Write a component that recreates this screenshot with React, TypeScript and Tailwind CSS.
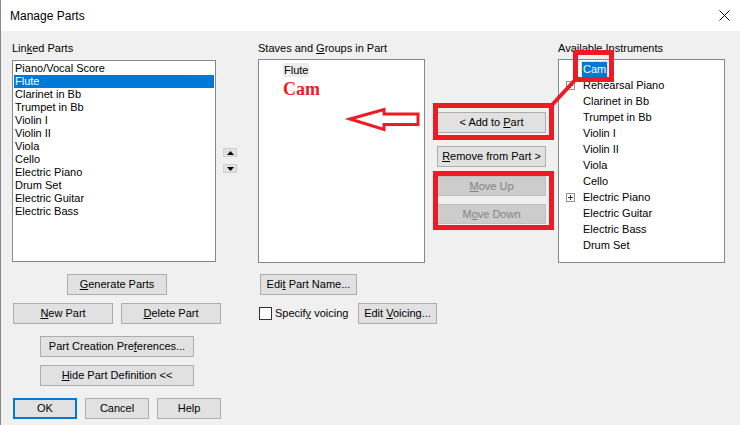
import React from 'react';

const font = { fontFamily: '"Liberation Sans", Arial, sans-serif' };

interface BtnProps {
  children: React.ReactNode;
  className?: string;
  disabled?: boolean;
  primary?: boolean;
}

const Btn: React.FC<BtnProps> = ({ children, className = '', disabled, primary }) => (
  <div
    className={
      (disabled
        ? 'bg-[#cccccc] border border-[#bfbfbf] text-[#838383] '
        : primary
        ? 'bg-[#e1e1e1] border-2 border-[#0078d7] text-black '
        : 'bg-[#e1e1e1] border border-[#adadad] text-black ') +
      'flex items-center justify-center shrink-0 h-[21px] leading-none ' +
      className
    }
  >
    <span>{children}</span>
  </div>
);

const PlusBox = () => (
  <div className="w-[9px] h-[9px] border border-[#919191] bg-white flex items-center justify-center relative">
    <div className="absolute w-[5px] h-[1px] bg-[#333]" />
    <div className="absolute w-[1px] h-[5px] bg-[#333]" />
  </div>
);

const linkedParts = [
  'Piano/Vocal Score',
  'Flute',
  'Clarinet in Bb',
  'Trumpet in Bb',
  'Violin I',
  'Violin II',
  'Viola',
  'Cello',
  'Electric Piano',
  'Drum Set',
  'Electric Guitar',
  'Electric Bass',
];

const instruments = [
  { name: 'Cam', selected: true },
  { name: 'Rehearsal Piano', plus: true },
  { name: 'Clarinet in Bb' },
  { name: 'Trumpet in Bb' },
  { name: 'Violin I' },
  { name: 'Violin II' },
  { name: 'Viola' },
  { name: 'Cello' },
  { name: 'Electric Piano', plus: true },
  { name: 'Electric Guitar' },
  { name: 'Electric Bass' },
  { name: 'Drum Set' },
];

export default function App() {
  return (
    <div
      className="w-[740px] h-[425px] bg-[#f0f0f0] relative overflow-hidden text-[11px] text-black border-l border-[#8a8a8a]"
      style={font}
    >
      {/* barre de titre */}
      <div className="h-[31px] bg-white flex items-center justify-between pl-[9px] pr-[10px]">
        <span className="text-[12px]">Manage Parts</span>
        <svg width="11" height="11" viewBox="0 0 11 11">
          <path d="M0.5 0.5 L10.5 10.5 M10.5 0.5 L0.5 10.5" stroke="#000" strokeWidth="1" />
        </svg>
      </div>

      <div className="flex pl-[11px] pt-[9px]">
        {/* Linked Parts */}
        <div className="w-[226px] flex flex-col">
          <div className="h-[16px] leading-[16px]">
            Lin<u>k</u>ed Parts
          </div>
          <div className="flex mt-[4px]">
            <div className="w-[204px] h-[202px] border border-[#828790] bg-white p-[1px]">
              {linkedParts.map(p => (
                <div
                  key={p}
                  className={
                    p === 'Flute'
                      ? 'h-[13px] leading-[13px] px-[1px] bg-[#0078d7] text-white'
                      : 'h-[13px] leading-[13px] px-[1px]'
                  }
                >
                  {p}
                </div>
              ))}
            </div>
            <div className="flex flex-col ml-[7px] pt-[88px] gap-[7px]">
              <div className="w-[14px] h-[9px] bg-[#e1e1e1] border border-[#d0d0d0] flex items-center justify-center">
                <svg width="7" height="4" viewBox="0 0 7 4">
                  <path d="M0 4 L3.5 0 L7 4 Z" fill="#000" />
                </svg>
              </div>
              <div className="w-[14px] h-[9px] bg-[#e1e1e1] border border-[#d0d0d0] flex items-center justify-center">
                <svg width="7" height="4" viewBox="0 0 7 4">
                  <path d="M0 0 L7 0 L3.5 4 Z" fill="#000" />
                </svg>
              </div>
            </div>
          </div>
          <Btn className="w-[100px] ml-[55px] mt-[12px]">
            <u>G</u>enerate Parts
          </Btn>
          <div className="flex mt-[8px] ml-[1px] gap-[8px]">
            <Btn className="w-[100px]">
              <u>N</u>ew Part
            </Btn>
            <Btn className="w-[100px]">
              <u>D</u>elete Part
            </Btn>
          </div>
          <Btn className="w-[154px] ml-[28px] mt-[12px]">
            Part Creation Pre<u>f</u>erences...
          </Btn>
          <Btn className="w-[154px] ml-[28px] mt-[8px]">
            <u>H</u>ide Part Definition &lt;&lt;
          </Btn>
          <div className="flex mt-[12px] ml-[1px] gap-[8px]">
            <Btn primary className="w-[64px]">
              OK
            </Btn>
            <Btn className="w-[64px]">Cancel</Btn>
            <Btn className="w-[64px]">Help</Btn>
          </div>
        </div>

        {/* Staves and Groups */}
        <div className="w-[179px] ml-[20px] flex flex-col">
          <div className="h-[16px] leading-[16px]">
            Staves and <u>G</u>roups in Part
          </div>
          <div className="w-[167px] h-[204px] mt-[3px] border border-[#828790] bg-white pl-[24px] pt-[2px]">
            <div className="inline-block h-[14px] leading-[14px] px-[1px] bg-[#ececec]">Flute</div>
            <div
              className="h-[20px] leading-[20px] text-[18px] font-bold text-[#ed1c24]"
              style={{ fontFamily: '"Liberation Serif", "Times New Roman", serif' }}
            >
              Cam
            </div>
          </div>
          <Btn className="w-[97px] ml-[2px] mt-[11px]">
            Edi<u>t</u> Part Name...
          </Btn>
          <div className="flex items-center mt-[8px] ml-[1px]">
            <div className="w-[13px] h-[13px] border border-[#333] bg-white shrink-0" />
            <span className="ml-[3px]">
              Specif<u>y</u> voicing
            </span>
            <Btn className="w-[79px] ml-auto">
              Edit <u>V</u>oicing...
            </Btn>
          </div>
        </div>

        {/* boutons du milieu */}
        <div className="w-[109px] flex flex-col pt-[72px]">
          <Btn className="w-[109px]">
            &lt; Add to <u>P</u>art
          </Btn>
          <Btn className="w-[109px] mt-[13px]">
            <u>R</u>emove from Part &gt;
          </Btn>
          <Btn disabled className="w-[109px] mt-[9px] !h-[20px]">
            <u>M</u>ove Up
          </Btn>
          <Btn disabled className="w-[109px] mt-[8px] !h-[20px]">
            M<u>o</u>ve Down
          </Btn>
        </div>

        {/* Available Instruments */}
        <div className="w-[167px] ml-[12px] flex flex-col">
          <div className="h-[16px] leading-[16px]">
            Available <u>I</u>nstruments
          </div>
          <div className="w-[167px] h-[204px] mt-[3px] border border-[#828790] bg-white pt-[1px]">
            {instruments.map(i => (
              <div key={i.name} className="h-[16px] flex items-center">
                <div className="w-[23px] flex justify-end pr-[7px]">{i.plus && <PlusBox />}</div>
                <span
                  className={
                    i.selected
                      ? 'h-[15px] leading-[15px] px-[1px] bg-[#0078d7] text-white outline-1 outline-dotted outline-[#f5c26b]'
                      : 'h-[15px] leading-[15px] px-[1px]'
                  }
                >
                  {i.name}
                </span>
              </div>
            ))}
          </div>
        </div>
      </div>

      {/* annotations rouges */}
      <svg className="absolute top-0 left-0 pointer-events-none" width="740" height="425" viewBox="0 0 740 425">
        <rect x="574.5" y="52.5" width="36" height="27" fill="none" stroke="#ed1c24" strokeWidth="5" />
        <path d="M575 79 L550 106" stroke="#ed1c24" strokeWidth="4" />
        <rect x="434.5" y="105.5" width="116" height="32" fill="none" stroke="#ed1c24" strokeWidth="5" />
        <rect x="434.5" y="173.5" width="116" height="54" fill="none" stroke="#ed1c24" strokeWidth="5" />
        <polygon
          points="349,119 383,109.5 383,114 417,114 417,124.5 383,124.5 383,129.5"
          fill="#fff"
          stroke="#ed1c24"
          strokeWidth="3"
          strokeLinejoin="miter"
        />
      </svg>
    </div>
  );
}
